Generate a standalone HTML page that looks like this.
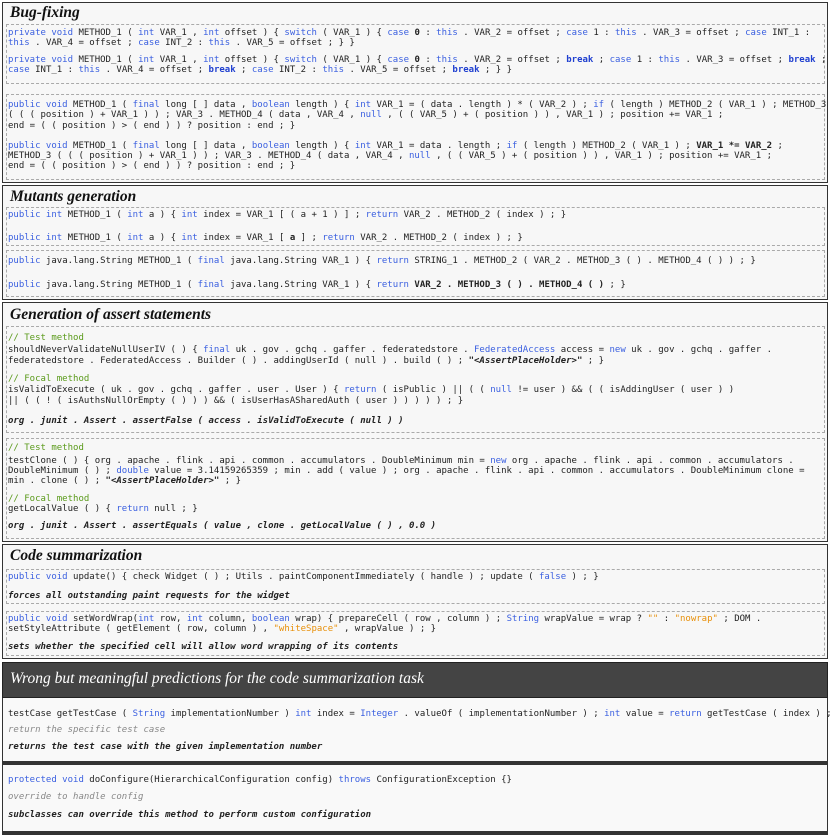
<!DOCTYPE html>
<html><head><meta charset="utf-8"><style>
*{margin:0;padding:0;box-sizing:border-box}
body{width:830px;height:839px;background:#fff;position:relative;overflow:hidden;font-family:"DejaVu Sans Mono","Liberation Mono",monospace;font-size:9px;color:#222}
.o{position:absolute;left:2px;width:826px;border:1px solid #333;background:#f7f7f7}
.d{position:absolute;left:6px;width:819px;border:1px dashed #aaa}
.t{position:absolute;left:10px;font-family:"Liberation Serif",serif;font-style:italic;font-weight:bold;font-size:15.5px;color:#111}
.l{position:absolute;left:8px;line-height:10px;white-space:pre}
.k{color:#3a5fe0}
.kb{color:#2040d0;font-weight:bold}
.b{font-weight:bold}
.c{color:#5a9a1a}
.s{color:#e8900a}
.g{color:#888;font-style:italic}
.i{font-weight:bold;font-style:italic}
.hd{position:absolute;left:2px;top:662px;width:826px;height:36px;background:#444;border:1px solid #222}
.p{position:absolute;left:2px;width:826px;background:#f9f9f9;border-left:1px solid #333;border-right:1px solid #333}
.bar{position:absolute;left:2px;width:826px;background:#333}
</style></head><body>

<div class="o" style="top:2px;height:181px"></div>
<div class="t" style="top:4px">Bug-fixing</div>
<div class="d" style="top:24px;height:60px"></div>
<div class="d" style="top:94px;height:86px"></div>
<div class="l" style="top:28px"><span class="k">private void</span> METHOD_1 ( <span class="k">int</span> VAR_1 , <span class="k">int</span> offset ) { <span class="k">switch</span> ( VAR_1 ) { <span class="k">case</span> <b>0</b> : <span class="k">this</span> . VAR_2 = offset ; <span class="k">case</span> 1 : <span class="k">this</span> . VAR_3 = offset ; <span class="k">case</span> INT_1 :</div>
<div class="l" style="top:38px"><span class="k">this</span> . VAR_4 = offset ; <span class="k">case</span> INT_2 : <span class="k">this</span> . VAR_5 = offset ; } }</div>
<div class="l" style="top:55px"><span class="k">private void</span> METHOD_1 ( <span class="k">int</span> VAR_1 , <span class="k">int</span> offset ) { <span class="k">switch</span> ( VAR_1 ) { <span class="k">case</span> <b>0</b> : <span class="k">this</span> . VAR_2 = offset ; <span class="kb">break</span> ; <span class="k">case</span> 1 : <span class="k">this</span> . VAR_3 = offset ; <span class="kb">break</span> ;</div>
<div class="l" style="top:65px"><span class="k">case</span> INT_1 : <span class="k">this</span> . VAR_4 = offset ; <span class="kb">break</span> ; <span class="k">case</span> INT_2 : <span class="k">this</span> . VAR_5 = offset ; <span class="kb">break</span> ; } }</div>
<div class="l" style="top:100px"><span class="k">public void</span> METHOD_1 ( <span class="k">final</span> long [ ] data , <span class="k">boolean</span> length ) { <span class="k">int</span> VAR_1 = ( data . length ) * ( VAR_2 ) ; <span class="k">if</span> ( length ) METHOD_2 ( VAR_1 ) ; METHOD_3</div>
<div class="l" style="top:110px">( ( ( position ) + VAR_1 ) ) ; VAR_3 . METHOD_4 ( data , VAR_4 , <span class="k">null</span> , ( ( VAR_5 ) + ( position ) ) , VAR_1 ) ; position += VAR_1 ;</div>
<div class="l" style="top:121px">end = ( ( position ) &gt; ( end ) ) ? position : end ; }</div>
<div class="l" style="top:141px"><span class="k">public void</span> METHOD_1 ( <span class="k">final</span> long [ ] data , <span class="k">boolean</span> length ) { <span class="k">int</span> VAR_1 = data . length ; <span class="k">if</span> ( length ) METHOD_2 ( VAR_1 ) ; <b>VAR_1 *= VAR_2</b> ;</div>
<div class="l" style="top:151px">METHOD_3 ( ( ( position ) + VAR_1 ) ) ; VAR_3 . METHOD_4 ( data , VAR_4 , <span class="k">null</span> , ( ( VAR_5 ) + ( position ) ) , VAR_1 ) ; position += VAR_1 ;</div>
<div class="l" style="top:161px">end = ( ( position ) &gt; ( end ) ) ? position : end ; }</div>

<div class="o" style="top:185px;height:115px"></div>
<div class="t" style="top:188px">Mutants generation</div>
<div class="d" style="top:207px;height:39px"></div>
<div class="d" style="top:250px;height:47px"></div>
<div class="l" style="top:210px"><span class="k">public int</span> METHOD_1 ( <span class="k">int</span> a ) { <span class="k">int</span> index = VAR_1 [ ( a + 1 ) ] ; <span class="k">return</span> VAR_2 . METHOD_2 ( index ) ; }</div>
<div class="l" style="top:233px"><span class="k">public int</span> METHOD_1 ( <span class="k">int</span> a ) { <span class="k">int</span> index = VAR_1 [ <b>a</b> ] ; <span class="k">return</span> VAR_2 . METHOD_2 ( index ) ; }</div>
<div class="l" style="top:256px"><span class="k">public</span> java.lang.String METHOD_1 ( <span class="k">final</span> java.lang.String VAR_1 ) { <span class="k">return</span> STRING_1 . METHOD_2 ( VAR_2 . METHOD_3 ( ) . METHOD_4 ( ) ) ; }</div>
<div class="l" style="top:280px"><span class="k">public</span> java.lang.String METHOD_1 ( <span class="k">final</span> java.lang.String VAR_1 ) { <span class="k">return</span> <b>VAR_2 . METHOD_3 ( ) . METHOD_4 ( )</b> ; }</div>

<div class="o" style="top:302px;height:240px"></div>
<div class="t" style="top:306px">Generation of assert statements</div>
<div class="d" style="top:326px;height:107px"></div>
<div class="d" style="top:438px;height:101px"></div>
<div class="l" style="top:333px"><span class="c">// Test method</span></div>
<div class="l" style="top:345px">shouldNeverValidateNullUserIV ( ) { <span class="k">final</span> uk . gov . gchq . gaffer . federatedstore . <span class="k">FederatedAccess</span> access = <span class="k">new</span> uk . gov . gchq . gaffer .</div>
<div class="l" style="top:356px">federatedstore . FederatedAccess . Builder ( ) . addingUserId ( null ) . build ( ) ; <b>"<i>&lt;AssertPlaceHolder&gt;</i>"</b> ; }</div>
<div class="l" style="top:374px"><span class="c">// Focal method</span></div>
<div class="l" style="top:385px">isValidToExecute ( uk . gov . gchq . gaffer . user . User ) { <span class="k">return</span> ( isPublic ) || ( ( <span class="k">null</span> != user ) &amp;&amp; ( ( isAddingUser ( user ) )</div>
<div class="l" style="top:396px">|| ( ( ! ( isAuthsNullOrEmpty ( ) ) ) &amp;&amp; ( isUserHasASharedAuth ( user ) ) ) ) ) ; }</div>
<div class="l i" style="top:416px">org . junit . Assert . assertFalse ( access . isValidToExecute ( null ) )</div>
<div class="l" style="top:443px"><span class="c">// Test method</span></div>
<div class="l" style="top:456px">testClone ( ) { org . apache . flink . api . common . accumulators . DoubleMinimum min = <span class="k">new</span> org . apache . flink . api . common . accumulators .</div>
<div class="l" style="top:466px">DoubleMinimum ( ) ; <span class="k">double</span> value = 3.14159265359 ; min . add ( value ) ; org . apache . flink . api . common . accumulators . DoubleMinimum clone =</div>
<div class="l" style="top:476px">min . clone ( ) ; <b>"<i>&lt;AssertPlaceHolder&gt;</i>"</b> ; }</div>
<div class="l" style="top:494px"><span class="c">// Focal method</span></div>
<div class="l" style="top:504px">getLocalValue ( ) { <span class="k">return</span> null ; }</div>
<div class="l i" style="top:521px">org . junit . Assert . assertEquals ( value , clone . getLocalValue ( ) , 0.0 )</div>

<div class="o" style="top:544px;height:115px"></div>
<div class="t" style="top:547px">Code summarization</div>
<div class="d" style="top:569px;height:35px"></div>
<div class="d" style="top:611px;height:45px"></div>
<div class="l" style="top:572px"><span class="k">public void</span> update() { check Widget ( ) ; Utils . paintComponentImmediately ( handle ) ; update ( <span class="k">false</span> ) ; }</div>
<div class="l i" style="top:591px">forces all outstanding paint requests for the widget</div>
<div class="l" style="top:614px"><span class="k">public void</span> setWordWrap(<span class="k">int</span> row, <span class="k">int</span> column, <span class="k">boolean</span> wrap) { prepareCell ( row , column ) ; <span class="k">String</span> wrapValue = wrap ? <span class="s">""</span> : <span class="s">"nowrap"</span> ; DOM .</div>
<div class="l" style="top:624px">setStyleAttribute ( getElement ( row, column ) , <span class="s">"whiteSpace"</span> , wrapValue ) ; }</div>
<div class="l i" style="top:642px">sets whether the specified cell will allow word wrapping of its contents</div>

<div class="hd"></div>
<div class="t" style="top:670px;color:#fff;font-size:15.5px;font-weight:normal">Wrong but meaningful predictions for the code summarization task</div>
<div class="p" style="top:698px;height:64px"></div>
<div class="bar" style="top:761px;height:4px"></div>
<div class="p" style="top:765px;height:67px"></div>
<div class="bar" style="top:831px;height:4px"></div>
<div class="l" style="top:709px">testCase getTestCase ( <span class="k">String</span> implementationNumber ) <span class="k">int</span> index = <span class="k">Integer</span> . valueOf ( implementationNumber ) ; <span class="k">int</span> value = <span class="k">return</span> getTestCase ( index ) ;</div>
<div class="l g" style="top:725px">return the specific test case</div>
<div class="l i" style="top:742px">returns the test case with the given implementation number</div>
<div class="l" style="top:775px"><span class="k">protected void</span> doConfigure(HierarchicalConfiguration config) <span class="k">throws</span> ConfigurationException {}</div>
<div class="l g" style="top:792px">override to handle config</div>
<div class="l i" style="top:810px">subclasses can override this method to perform custom configuration</div>
</body></html>
